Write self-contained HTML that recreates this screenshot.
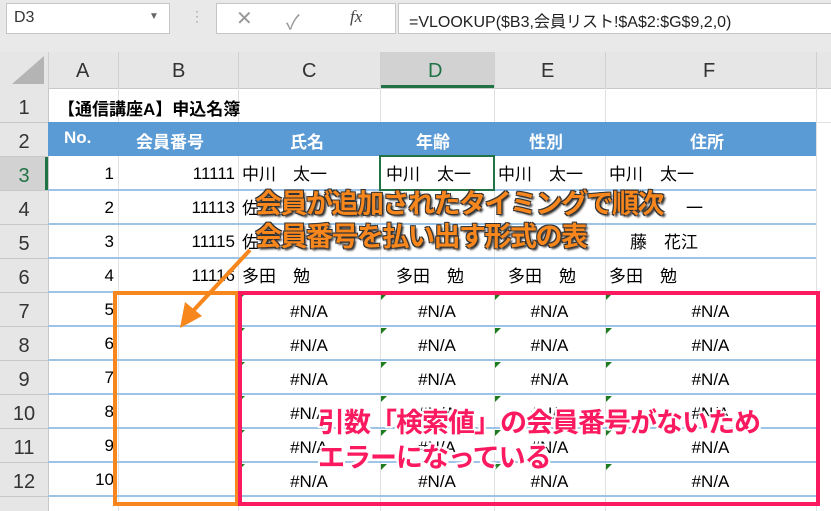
<!DOCTYPE html><html><head><meta charset="utf-8"><style>
body{margin:0;width:831px;height:511px;overflow:hidden;background:#fff;font-family:"Liberation Sans","Noto Sans CJK JP",sans-serif;position:relative}
.a{position:absolute;white-space:nowrap}
.fb{left:0;top:0;width:831px;height:52px;background:#e9e9e9}
.box{background:#fff;border:1px solid #c6c6c6}
.hd{background:#e6e6e6;color:#333;font-size:20px;text-align:center}
</style></head><body>
<div class="a fb"></div>
<div class="a box" style="left:6px;top:3px;width:162px;height:29px"></div>
<div class="a" style="left:14px;top:9px;font-size:16px;color:#333">D3</div>
<div class="a" style="left:149px;top:11px;font-size:10px;color:#666">▼</div>
<div class="a" style="left:190px;top:8px;font-size:14px;color:#aaa">⋮</div>
<div class="a box" style="left:216px;top:3px;width:178px;height:29px"></div>
<div class="a" style="left:236px;top:6px;font-size:20px;color:#999">✕</div>
<div class="a" style="left:286px;top:6px;font-size:20px;color:#999">✓</div>
<div class="a" style="left:350px;top:7px;font-size:17px;color:#444;font-style:italic;font-family:'Liberation Serif',serif">fx</div>
<div class="a box" style="left:398px;top:3px;width:440px;height:29px"></div>
<div class="a" style="left:409px;top:8px;font-size:16px;color:#222">=VLOOKUP($B3,会員リスト!$A$2:$G$9,2,0)</div>
<div class="a hd" style="left:0;top:52px;width:831px;height:36px;border-bottom:1px solid #c8c8c8"></div>
<div class="a hd" style="left:0;top:88px;width:48px;height:423px;border-right:1px solid #c8c8c8"></div>
<svg class="a" style="left:0;top:52px" width="831" height="459">
<polygon points="12,32 44,32 44,4" fill="#b4b4b4"/>
<rect x="380" y="0" width="114" height="36" fill="#d2d2d2"/><rect x="380" y="33" width="114" height="3" fill="#217346"/>
<rect x="0" y="104" width="48" height="34" fill="#d2d2d2"/><rect x="45" y="104" width="3" height="34" fill="#217346"/>
<g stroke="#d0d0d0"><line x1="48.5" y1="0" x2="48.5" y2="36"/><line x1="118.5" y1="0" x2="118.5" y2="36"/><line x1="238.5" y1="0" x2="238.5" y2="36"/><line x1="380.5" y1="0" x2="380.5" y2="36"/><line x1="494.5" y1="0" x2="494.5" y2="36"/><line x1="605.5" y1="0" x2="605.5" y2="36"/><line x1="816.5" y1="0" x2="816.5" y2="36"/></g>
<g stroke="#c8c8c8"><line x1="0" y1="70.5" x2="48" y2="70.5"/><line x1="0" y1="104.5" x2="48" y2="104.5"/><line x1="0" y1="138.5" x2="48" y2="138.5"/><line x1="0" y1="172.5" x2="48" y2="172.5"/><line x1="0" y1="206.5" x2="48" y2="206.5"/><line x1="0" y1="240.5" x2="48" y2="240.5"/><line x1="0" y1="274.5" x2="48" y2="274.5"/><line x1="0" y1="308.5" x2="48" y2="308.5"/><line x1="0" y1="342.5" x2="48" y2="342.5"/><line x1="0" y1="376.5" x2="48" y2="376.5"/><line x1="0" y1="410.5" x2="48" y2="410.5"/><line x1="0" y1="444.5" x2="48" y2="444.5"/></g>
<g stroke="#e0e0e0"><line x1="118.5" y1="36" x2="118.5" y2="459"/><line x1="238.5" y1="36" x2="238.5" y2="459"/><line x1="380.5" y1="36" x2="380.5" y2="459"/><line x1="494.5" y1="36" x2="494.5" y2="459"/><line x1="605.5" y1="36" x2="605.5" y2="459"/><line x1="816.5" y1="36" x2="816.5" y2="459"/><line x1="48" y1="70.5" x2="831" y2="70.5"/></g>
<rect x="48" y="70" width="768" height="34" fill="#5b9bd5"/>
<g stroke="#9dc3e6" stroke-width="2"><line x1="48" y1="138" x2="816" y2="138"/><line x1="48" y1="172" x2="816" y2="172"/><line x1="48" y1="206" x2="816" y2="206"/><line x1="48" y1="240" x2="816" y2="240"/><line x1="48" y1="274" x2="816" y2="274"/><line x1="48" y1="308" x2="816" y2="308"/><line x1="48" y1="342" x2="816" y2="342"/><line x1="48" y1="376" x2="816" y2="376"/><line x1="48" y1="410" x2="816" y2="410"/><line x1="48" y1="444" x2="816" y2="444"/></g>
<rect x="380" y="104" width="114" height="34" fill="none" stroke="#217346" stroke-width="2"/>
<g fill="#1e7b1e">
<polygon points="239,242 245,242 239,248"/><polygon points="381,242 387,242 381,248"/><polygon points="495,242 501,242 495,248"/><polygon points="606,242 612,242 606,248"/>
<polygon points="239,276 245,276 239,282"/><polygon points="381,276 387,276 381,282"/><polygon points="495,276 501,276 495,282"/><polygon points="606,276 612,276 606,282"/>
<polygon points="239,310 245,310 239,316"/><polygon points="381,310 387,310 381,316"/><polygon points="495,310 501,310 495,316"/><polygon points="606,310 612,310 606,316"/>
<polygon points="239,344 245,344 239,350"/><polygon points="381,344 387,344 381,350"/><polygon points="495,344 501,344 495,350"/><polygon points="606,344 612,344 606,350"/>
<polygon points="239,378 245,378 239,384"/><polygon points="381,378 387,378 381,384"/><polygon points="495,378 501,378 495,384"/><polygon points="606,378 612,378 606,384"/>
<polygon points="239,412 245,412 239,418"/><polygon points="381,412 387,412 381,418"/><polygon points="495,412 501,412 495,418"/><polygon points="606,412 612,412 606,418"/>
</g>
</svg>
<div class="a" style="left:0;top:60px;width:831px;font-size:20px;color:#333">
<span class="a" style="left:76px">A</span><span class="a" style="left:172px">B</span><span class="a" style="left:302px">C</span><span class="a" style="left:428px;color:#217346">D</span><span class="a" style="left:541px">E</span><span class="a" style="left:703px">F</span></div>
<div class="a" style="left:0;top:91px;width:48px;font-size:20px;color:#333;text-align:center;line-height:34px">
<div>1</div><div>2</div><div style="color:#217346">3</div><div>4</div><div>5</div><div>6</div><div>7</div><div>8</div><div>9</div><div>10</div><div>11</div><div>12</div></div>
<div class="a" style="left:58px;top:95px;font-size:17px;font-weight:bold">【通信講座A】申込名簿</div>
<div class="a" style="top:128px;left:0;font-size:17px;font-weight:bold;color:#fff">
<span class="a" style="left:64px">No.</span><span class="a" style="left:136px">会員番号</span><span class="a" style="left:290px">氏名</span><span class="a" style="left:416px">年齢</span><span class="a" style="left:529px">性別</span><span class="a" style="left:690px">住所</span></div>
<div class="a" style="left:48px;top:157px;width:66px;text-align:right;font-size:17px;line-height:34px"><div>1</div><div>2</div><div>3</div><div>4</div><div>5</div><div>6</div><div>7</div><div>8</div><div>9</div><div>10</div></div>
<div class="a" style="left:118px;top:157px;width:117px;text-align:right;font-size:17px;line-height:34px"><div>11111</div><div>11113</div><div>11115</div><div>11116</div></div>
<div class="a" style="top:160px;left:0;font-size:17px">
<span class="a" style="left:242px">中川　太一</span><span class="a" style="left:386px">中川　太一</span><span class="a" style="left:498px">中川　太一</span><span class="a" style="left:609px">中川　太一</span>
<span class="a" style="left:242px;top:34px">佐</span><span class="a" style="left:686px;top:34px">一</span>
<span class="a" style="left:242px;top:68px">佐</span><span class="a" style="left:630px;top:68px">藤　花江</span>
<span class="a" style="left:242px;top:102px">多田　勉</span><span class="a" style="left:396px;top:102px">多田　勉</span><span class="a" style="left:508px;top:102px">多田　勉</span><span class="a" style="left:609px;top:102px">多田　勉</span></div>
<div class="a" style="top:295px;left:0;font-size:17px;line-height:34px">
<div class="a" style="left:238px;width:142px;text-align:center">#N/A<br>#N/A<br>#N/A<br>#N/A<br>#N/A<br>#N/A</div>
<div class="a" style="left:380px;width:114px;text-align:center">#N/A<br>#N/A<br>#N/A<br>#N/A<br>#N/A<br>#N/A</div>
<div class="a" style="left:494px;width:111px;text-align:center">#N/A<br>#N/A<br>#N/A<br>#N/A<br>#N/A<br>#N/A</div>
<div class="a" style="left:605px;width:211px;text-align:center">#N/A<br>#N/A<br>#N/A<br>#N/A<br>#N/A<br>#N/A</div></div>
<div class="a" style="left:113px;top:291px;width:118px;height:207px;border:4px solid #f7861c"></div>
<div class="a" style="left:238px;top:291px;width:574px;height:207px;border:4px solid #fb1a5f"></div>
<svg class="a" style="left:0;top:0" width="831" height="511"><line x1="250" y1="250" x2="192" y2="312" stroke="#f7861c" stroke-width="4"/><polygon points="180,328 185,302 202,316" fill="#f7861c"/></svg>
<div class="a" style="left:255px;top:188px;font-size:27px;font-weight:bold;color:#f7861c;line-height:33px;letter-spacing:-1.5px;text-shadow:-1px -1px 0 #333,1px -1px 0 #333,-1px 1px 0 #333,2px 2px 2px #222">会員が追加されたタイミングで順次<br>会員番号を払い出す形式の表</div>
<div class="a" style="left:318px;top:406px;font-size:27px;font-weight:bold;color:#fb1a5f;line-height:35px;letter-spacing:-1px;text-shadow:-2px -2px 0 #fff,2px -2px 0 #fff,-2px 2px 0 #fff,2px 2px 0 #fff,0 0 4px #fff">引数「検索値」の会員番号がないため<br>エラーになっている</div>
</body></html>
